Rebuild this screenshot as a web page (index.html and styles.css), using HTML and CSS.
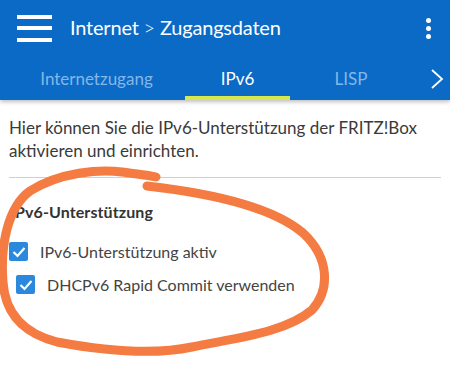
FILE: index.html
```html
<!DOCTYPE html>
<html lang="de">
<head>
    <meta charset="UTF-8">
    <meta name="viewport" content="width=device-width, initial-scale=1.0">
    <title>Internet &gt; Zugangsdaten</title>
    <link rel="stylesheet" href="styles.css">
</head>
<body>
    <header class="appbar">
        <div class="topbar">
            <button class="menu-btn" aria-label="Menü">
                <span></span><span></span><span></span>
            </button>
            <h1 class="title">Internet <span class="sep">&gt;</span> Zugangsdaten</h1>
            <button class="more-btn" aria-label="Mehr">
                <span></span><span></span><span></span>
            </button>
        </div>
        <nav class="tabs">
            <a class="tab tab-wide">Internetzugang</a>
            <a class="tab active">IPv6</a>
            <a class="tab">LISP</a>
            <span class="tab-next">
                <svg width="14" height="22" viewBox="0 0 14 22"><path d="M2 2 L12 11 L2 20" fill="none" stroke="#fff" stroke-width="1.8"/></svg>
            </span>
        </nav>
    </header>

    <main class="content">
        <p class="intro">Hier können Sie die IPv6-Unterstützung der FRITZ!Box aktivieren und einrichten.</p>
        <hr class="divider">

        <h2 class="section-title">Pv6-Unterstützung</h2>

        <label class="check">
            <span class="box"><svg width="14" height="12" viewBox="0 0 14 12"><path d="M1.5 6 L5.5 10 L12.5 2" fill="none" stroke="#fff" stroke-width="2.2"/></svg></span>
            IPv6-Unterstützung aktiv
        </label>
        <label class="check sub">
            <span class="box"><svg width="14" height="12" viewBox="0 0 14 12"><path d="M1.5 6 L5.5 10 L12.5 2" fill="none" stroke="#fff" stroke-width="2.2"/></svg></span>
            DHCPv6 Rapid Commit verwenden
        </label>
    </main>

    <!-- Markierung (Handzeichnung) -->
    <svg class="scribble" width="450" height="370" viewBox="0 0 450 370">
        <path d="M147 186 C200 192 270 205 303 233 C330 258 330 290 312 310 C285 333 235 338 192 347 C150 356 100 350 57 342 C22 333 5 312 3 282 C0 245 8 207 30 191 C60 172 100 169 122 172 C136 174 148 175 156 177"
              fill="none" stroke="#f47b42" stroke-width="9" stroke-linecap="round" stroke-linejoin="round"/>
    </svg>
</body>
</html>
```

FILE: styles.css
```css
* {
    box-sizing: border-box;
    margin: 0;
    padding: 0;
    font-family: Lato, "Open Sans", sans-serif;
}
body {
    background: #fff;
    width: 450px;
    height: 370px;
    overflow: hidden;
    position: relative;
}
.appbar {
    background: #0a6ac6;
    height: 100px;
    box-shadow: 0 2px 4px rgba(0,0,0,0.25);
}
.topbar {
    height: 56px;
    display: flex;
    align-items: center;
    padding: 0 0 0 17px;
}
button {
    background: none;
    border: none;
}
.menu-btn {
    width: 35px;
    height: 27px;
    display: flex;
    flex-direction: column;
    justify-content: space-between;
}
.menu-btn span {
    display: block;
    height: 4px;
    background: #fff;
}
.title {
    color: #fff;
    font-size: 20px;
    font-weight: normal;
    margin-left: 18px;
    flex: 1;
    letter-spacing: -0.2px;
    margin-top: -2px;
}
.sep {
    font-weight: 300;
}
.more-btn {
    width: 44px;
    display: flex;
    flex-direction: column;
    align-items: center;
    gap: 3px;
}
.more-btn span {
    width: 5px;
    height: 5px;
    border-radius: 50%;
    background: #fff;
}
.tabs {
    height: 44px;
    display: flex;
    align-items: stretch;
}
.tab {
    color: #86b6e6;
    font-size: 17px;
    width: 105px;
    display: flex;
    align-items: center;
    justify-content: center;
    padding-top: 4px;
    border-bottom: 4px solid transparent;
}
.tab-wide {
    width: 185px;
    padding-left: 8px;
}
.tab.active {
    color: #fff;
    border-bottom-color: #d6e84e;
}
.tab:nth-child(3) {
    width: 122px;
}
.tab-next {
    flex: 1;
    display: flex;
    align-items: center;
    justify-content: center;
    padding-left: 12px;
    padding-top: 2px;
}
.content {
    padding: 16px 9px 0 9px;
    color: #3a3a3a;
}
.intro {
    font-size: 17px;
    line-height: 23px;
}
.divider {
    border: none;
    border-top: 1px solid #cfcfcf;
    margin: 15px 0 0 0;
}
.section-title {
    font-size: 16px;
    font-weight: bold;
    margin: 24px 0 0 6px;
    color: #333;
    letter-spacing: 0.1px;
}
.check {
    display: flex;
    align-items: center;
    font-size: 16px;
    color: #444;
    margin-top: 21px;
}
.check.sub {
    margin-top: 14px;
    padding-left: 7px;
}
.box {
    width: 19px;
    height: 19px;
    border-radius: 2px;
    background: #2b88dd;
    display: flex;
    align-items: center;
    justify-content: center;
    margin-right: 12px;
}
.scribble {
    position: absolute;
    left: 0;
    top: 0;
    pointer-events: none;
}
```
